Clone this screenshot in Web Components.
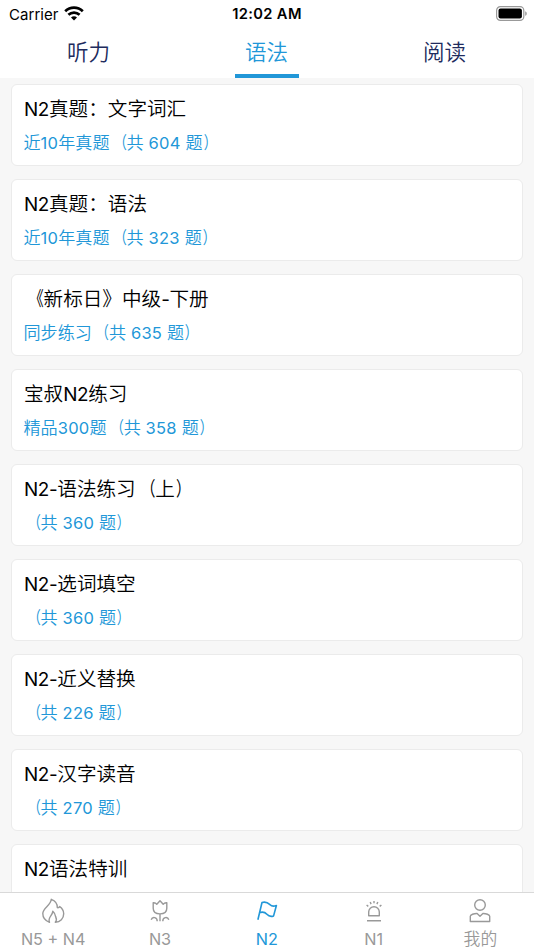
<!DOCTYPE html>
<html lang="zh-CN">
<head>
<meta charset="utf-8">
<title>N2 语法</title>
<style>
html, body { margin: 0; height: 100%; overflow: hidden; }
body { font-family: Inter, "Noto Sans CJK SC", sans-serif; color: #000; }
</style>
</head>
<body>
<quiz-app></quiz-app>
<script>
const define = (name, html, setup) => {
  const template = document.createElement('template');
  template.innerHTML = html;
  customElements.define(name, class extends HTMLElement {
    connectedCallback() {
      if (this.shadowRoot) return;
      this.attachShadow({ mode: 'open' }).append(template.content.cloneNode(true));
      if (setup) setup(this, this.shadowRoot);
    }
  });
};

// Latin runs are set a little smaller than the Chinese text around them,
// and full-width brackets are drawn narrower.
const mixed = (text) => text
  .replace(/[A-Za-z0-9+\-: ]+|[《（）]/g, (run) =>
    run === '《' ? '<span class="b">《</span>' :
    run === '（' ? '<span class="o">（</span>' :
    run === '）' ? '<span class="c">）</span>' : `<span class="l">${run}</span>`);

define('status-bar', `
<style>
:host { display: grid; grid-template-columns: 1fr auto 1fr; align-items: center; height: 28px; box-sizing: border-box; padding: 0 6px 0 9px; font-size: 15px; }
.left { display: flex; align-items: center; gap: 6px; }
.carrier { letter-spacing: 0.04px; }
.time { font-weight: 600; font-size: 14.7px; letter-spacing: 0.35px; margin-right: 3px; }
svg { display: block; }
.battery { justify-self: end; margin-bottom: 1px; }
.wifi { margin-bottom: 2px; }
</style>
<div class="left"><span class="carrier">Carrier</span>
<svg class="wifi" width="20" height="15" viewBox="0 0 20 15" fill="none" stroke="#000" stroke-width="2.7"><path d="M1.200 5.300C6.200.5 13.800.5 18.800 5.300"/><path d="M4.400 8.800C7.600 5.800 12.400 5.800 15.600 8.800"/><path d="M10 14.500l-3-3c1.700-1.600 4.300-1.600 6 0z" fill="#000" stroke="none"/></svg></div>
<span class="time">12:02 AM</span>
<svg class="battery" width="32" height="15" viewBox="0 0 32 15"><rect x=".6" y=".6" width="27.200" height="13.800" rx="3.800" fill="none" stroke="#999" stroke-width="1.200"/><rect x="2.500" y="2.600" width="23.400" height="9.800" rx="2" fill="#000"/><path d="M29.200 5.200c2.100.9 2.100 3.700 0 4.600z" fill="#999"/></svg>`);

define('top-tab', `
<style>
:host { flex: 1; display: flex; justify-content: center; color: #202b5d; font-size: 21.5px; }
div { width: 64px; height: 50px; box-sizing: border-box; border-bottom: 4px solid transparent; text-align: center; line-height: 49px; font-weight: 350; white-space: nowrap; text-indent: -1px; }
:host([active]) { color: #2197d8; }
:host([active]) div { border-color: #2197d8; }
</style><div><slot></slot></div>`);

define('quiz-card', `
<style>
:host { display: block; flex: none; height: 82px; box-sizing: border-box; border: 1.5px solid #ebebeb; border-radius: 6px; background: #fff; padding: 8px 12px 0; white-space: nowrap; }
.title { font-size: 19.6px; line-height: 33px; height: 32px; font-weight: 350; }
.sub { font-size: 17.1px; line-height: 28px; height: 28px; margin-top: 4px; margin-left: -.5px; color: #2197d8; font-weight: 350; }
.l { font-size: .965em; letter-spacing: -.02em; font-weight: 400; }
.sub .l { letter-spacing: .015em; }
.o, .c, .b { display: inline-block; line-height: 1; font-weight: 400; transform: scaleX(.75); }
.o { transform-origin: 96% 50%; }
.c { transform-origin: 18% 50%; }
.b { transform-origin: 100% 50%; }
</style><div class="title"></div><div class="sub"></div>`, (host, root) => {
  root.querySelector('.title').innerHTML = mixed(host.getAttribute('heading'));
  root.querySelector('.sub').innerHTML = mixed(host.getAttribute('detail') || '');
});

const icons = {
  fire: '<path d="M8.500 24.300C4.300 22.900 1.800 19.700 1.800 15.600C1.800 9.600 9.700 8 10.300 1.300C13.700 2.600 16.500 5.700 16.300 9.600C17.300 9.800 18.300 9.400 18.700 8.600C21.200 10.300 22.700 12.700 22.700 15.700C22.700 20.500 19.300 24 14.300 24.300C15.500 22.800 15.700 20.700 14.700 18.800C14.400 16.700 13.500 14.800 11.800 13.300C11.600 17.800 6.300 19.200 8.500 24.300z"/>',
  tulip: '<path d="M5.200 4.800c1.400-.2 2.700.3 3.600 1.500L12 2.700l3.200 3.600c.9-1.200 2.200-1.700 3.600-1.500v5.500c0 4-2.800 5.600-6.800 5.600s-6.800-1.600-6.800-5.600zM12 16v7.200M3.200 21.700c1.200-3.500 6.200-2.500 6 1.500M20.800 21.700c-1.200-3.500-6.200-2.500-6 1.500"/>',
  flag: '<path d="M2.900 21.700L7 4.500c4.200-1.500 6.200.5 8.100 2.300 1.700 1.700 3.400 1.700 6.300.7l-2.800 10.400c-3.500 1.400-5 .3-6.700-1.600-2-2.300-4.500-2.800-7.800-1.500" stroke-width="1.600"/>',
  alarm: '<path d="M6.700 17.700v-3.600a5.300 5.300 0 0 1 10.600 0v3.600zM5 22.700h14"/><path d="M12 3v2.300M8.200 4l.9 2.100M15.800 4l-.9 2.100M4.600 7l1.700 1.400M19.400 7l-1.700 1.400"/>',
  person: '<circle cx="12" cy="7" r="5.300"/><path d="M2.300 23.500v-5.200c0-1.600 3.800-2.900 6.800-2.800l2.900 2.800 2.900-2.800c3-.1 6.800 1.200 6.800 2.800v5.200z"/>'
};

define('bottom-tab', `
<style>
:host { flex: 1; display: flex; flex-direction: column; align-items: center; color: #999; font-size: 16.8px; padding: 5px .4px 0 0; }
:host([active]) { color: #2197d8; }
svg { display: block; flex: none; width: 24px; height: 26px; fill: none; stroke: currentColor; stroke-width: 1.4; stroke-linejoin: round; }
div { line-height: 24px; margin-top: 3px; font-weight: 350; white-space: nowrap; }
.l { font-size: .965em; font-weight: 400; }
</style><svg viewBox="0 0 24 26"></svg><div></div>`, (host, root) => {
  root.querySelector('svg').innerHTML = icons[host.getAttribute('icon')];
  root.querySelector('div').innerHTML = mixed(host.getAttribute('label'));
});

define('quiz-app', `
<style>
:host { display: flex; flex-direction: column; height: 100vh; background: #fff; overflow: hidden; }
nav { flex: none; height: 50px; display: flex; }
main { flex: 1; min-height: 0; overflow: hidden; background: #f7f7f7; display: flex; flex-direction: column; gap: 13px; padding: 6px 11px 0; }
footer { flex: none; height: 58px; box-sizing: border-box; border-top: 1px solid #d9d9d9; display: flex; background: #fff; }
</style>
<status-bar></status-bar>
<nav><top-tab>听力</top-tab><top-tab active>语法</top-tab><top-tab>阅读</top-tab></nav>
<main>
<quiz-card heading="N2真题：文字词汇" detail="近10年真题（共 604 题）"></quiz-card>
<quiz-card heading="N2真题：语法" detail="近10年真题（共 323 题）"></quiz-card>
<quiz-card heading="《新标日》中级-下册" detail="同步练习（共 635 题）"></quiz-card>
<quiz-card heading="宝叔N2练习" detail="精品300题（共 358 题）"></quiz-card>
<quiz-card heading="N2-语法练习（上）" detail="（共 360 题）"></quiz-card>
<quiz-card heading="N2-选词填空" detail="（共 360 题）"></quiz-card>
<quiz-card heading="N2-近义替换" detail="（共 226 题）"></quiz-card>
<quiz-card heading="N2-汉字读音" detail="（共 270 题）"></quiz-card>
<quiz-card heading="N2语法特训"></quiz-card>
</main>
<footer>
<bottom-tab icon="fire" label="N5 + N4"></bottom-tab>
<bottom-tab icon="tulip" label="N3"></bottom-tab>
<bottom-tab icon="flag" label="N2" active></bottom-tab>
<bottom-tab icon="alarm" label="N1"></bottom-tab>
<bottom-tab icon="person" label="我的"></bottom-tab>
</footer>`);
</script>
</body>
</html>
